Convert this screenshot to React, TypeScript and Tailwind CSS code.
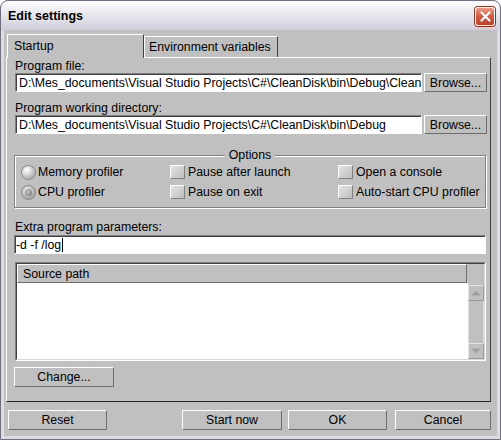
import React from "react";

function Btn({ children, className }: { children: React.ReactNode; className?: string }) {
  return (
    <div
      className={
        "flex items-center justify-center shrink-0 bg-[#c0c0c0] border border-t-white border-l-white border-b-[#6c6c6c] border-r-[#6c6c6c] text-black " +
        (className ?? "")
      }
    >
      {children}
    </div>
  );
}

function Sunken({ children, className }: { children?: React.ReactNode; className?: string }) {
  return (
    <div
      className={
        "min-w-0 bg-white border border-t-[#808080] border-l-[#808080] border-b-white border-r-white shadow-[inset_1px_1px_0_#404040] flex items-center overflow-hidden whitespace-nowrap " +
        (className ?? "")
      }
    >
      {children}
    </div>
  );
}

function Radio({ checked }: { checked?: boolean }) {
  return (
    <span
      className={
        "w-[13px] h-[13px] rounded-full shrink-0 flex items-center justify-center shadow-[0_0_0_1px_#8a8a8a] " +
        (checked
          ? "bg-[radial-gradient(circle_at_40%_35%,#f4f4f4_0%,#b4b4b4_55%,#7c7c7c_100%)]"
          : "bg-[radial-gradient(circle_at_35%_30%,#ffffff_0%,#d6d6d6_40%,#8e8e8e_100%)]")
      }
    >
      {checked && (
        <span className="w-[7px] h-[7px] rounded-full bg-[radial-gradient(circle_at_40%_40%,#c8c8c8_0%,#9a9a9a_50%,#6a6a6a_100%)]" />
      )}
    </span>
  );
}

function Check() {
  return (
    <span className="w-[15px] h-[14px] shrink-0 bg-[linear-gradient(135deg,#e4e4e4,#bdbdbd)] border border-t-white border-l-white border-b-[#808080] border-r-[#808080]" />
  );
}

function ScrollBtn({ up }: { up?: boolean }) {
  return (
    <div className="h-[16px] w-[16px] flex items-center justify-center bg-[#c0c0c0] border border-t-[#e4e4e4] border-l-[#e4e4e4] border-b-[#9a9a9a] border-r-[#9a9a9a]">
      <svg width="10" height="6" viewBox="0 0 10 6">
        {up ? <path d="M0 5.5 L5 0.5 L10 5.5 Z" fill="#a2a2a2" /> : <path d="M0 0.5 L5 5.5 L10 0.5 Z" fill="#a2a2a2" />}
      </svg>
    </div>
  );
}

export default function App() {
  return (
    <div className="w-[501px] h-[440px] flex flex-col bg-[#6f6f80] border border-[#6f6f80] rounded-t-[8px] overflow-hidden font-['Liberation_Sans',Arial,sans-serif] text-[12.3px] leading-[14px] text-black">
      {/* title bar */}
      <div className="h-[29px] shrink-0 flex items-start bg-[linear-gradient(#fdfdfe,#e8e8ef_45%,#cfcfda)]">
        <span className="ml-[7px] mt-[8px] font-bold text-[12.5px] leading-[15px] text-black">Edit settings</span>
        <div className="ml-auto mr-[5px] mt-[6px] w-[20px] h-[19px] rounded-[3px] border border-white bg-[linear-gradient(#ec9c88,#d6583e_50%,#c0402a)] shadow-[0_0_0_1px_#8e3626] flex items-center justify-center">
          <svg width="11" height="11" viewBox="0 0 11 11">
            <path d="M1.5 1.5 L9.5 9.5 M9.5 1.5 L1.5 9.5" stroke="white" strokeWidth="2.2" strokeLinecap="round" />
          </svg>
        </div>
      </div>

      {/* frame */}
      <div className="flex-1 min-h-0 flex border-x-[3px] border-b-[3px] border-[#dcdce4]">
        <div className="w-[493px] min-w-0 bg-[#c0c0c0] flex flex-col pl-[2px] pr-[6px] pt-[4px]">
          {/* tabs */}
          <div className="flex items-end h-[23px] pl-[1px]">
            <div className="relative z-10 h-[24px] mb-[-1px] w-[137px] bg-[#c0c0c0] border-t border-l border-t-white border-l-white border-r border-r-[#404040] pl-[6px] pt-[4px]">
              Startup
            </div>
            <div className="h-[21px] w-[134px] border-t border-l border-t-white border-l-white border-r border-r-[#404040] pl-[4px] pt-[3px]">
              Environment variables
            </div>
          </div>

          {/* panel */}
          <div className="w-[485px] h-[345px] flex flex-col border border-t-white border-l-white border-r-[#404040] border-b-[#202020] pl-[7px] pr-[3px] pt-[1px]">
            <div className="h-[14px] ml-[1px]">Program file:</div>
            <div className="h-[19px] flex gap-[2px]">
              <Sunken className="flex-1 pl-[3px] ml-[1px]">
                {"D:\\Mes_documents\\Visual Studio Projects\\C#\\CleanDisk\\bin\\Debug\\CleanDisk.exe"}
              </Sunken>
              <Btn className="w-[63px]">Browse...</Btn>
            </div>

            <div className="h-[14px] ml-[1px] mt-[9px]">Program working directory:</div>
            <div className="h-[19px] flex gap-[2px]">
              <Sunken className="flex-1 pl-[3px] ml-[1px]">
                {"D:\\Mes_documents\\Visual Studio Projects\\C#\\CleanDisk\\bin\\Debug"}
              </Sunken>
              <Btn className="w-[63px]">Browse...</Btn>
            </div>

            {/* options group */}
            <div className="relative mt-[21px] mr-[1px] h-[53px] border border-[#808080] shadow-[inset_1px_1px_0_#ffffff,1px_1px_0_#ffffff]">
              <span className="absolute left-1/2 -translate-x-1/2 top-[-8px] px-[4px] bg-[#c0c0c0]">Options</span>
              <div className="grid grid-cols-[148px_168px_1fr] pl-[7px] pt-[6px]">
                <div className="h-[20px] flex items-center gap-[3px]">
                  <Radio />
                  <span>Memory profiler</span>
                </div>
                <div className="h-[20px] flex items-center gap-[3px]">
                  <Check />
                  <span>Pause after launch</span>
                </div>
                <div className="h-[20px] flex items-center gap-[3px]">
                  <Check />
                  <span>Open a console</span>
                </div>
                <div className="h-[20px] flex items-center gap-[3px]">
                  <Radio checked />
                  <span>CPU profiler</span>
                </div>
                <div className="h-[20px] flex items-center gap-[3px]">
                  <Check />
                  <span>Pause on exit</span>
                </div>
                <div className="h-[20px] flex items-center gap-[3px]">
                  <Check />
                  <span>Auto-start CPU profiler</span>
                </div>
              </div>
            </div>

            <div className="h-[14px] ml-[1px] mt-[12px]">Extra program parameters:</div>
            <Sunken className="mt-[1px] mr-[1px] h-[19px] pl-[1px]">
              <span>-d -f /log</span>
              <span className="inline-block w-px h-[14px] bg-black ml-[1px]" />
            </Sunken>

            {/* table */}
            <div className="mt-[8px] mr-[1px] ml-[1px] h-[99px] border border-t-[#808080] border-l-[#808080] border-b-white border-r-white">
              <div className="h-full flex flex-col border border-t-[#404040] border-l-[#404040] border-b-[#d8d8d8] border-r-[#d8d8d8]">
                <div className="h-[19px] flex shrink-0">
                  <div className="w-[450px] flex items-center pl-[5px] bg-[#c0c0c0] border border-t-white border-l-white border-b-[#6c6c6c] border-r-[#6c6c6c]">
                    Source path
                  </div>
                  <div className="flex-1 bg-[#c0c0c0]" />
                </div>
                <div className="flex-1 flex">
                  <div className="flex-1 bg-white" />
                  <div className="w-[16px] flex flex-col bg-[#c0c0c0] pt-[2px]">
                    <ScrollBtn up />
                    <div className="flex-1 border-x border-[#dedede]" />
                    <ScrollBtn />
                  </div>
                </div>
              </div>
            </div>

            <Btn className="mt-[6px] w-[100px] h-[20px]">Change...</Btn>
          </div>

          {/* bottom buttons */}
          <div className="mt-[8px] h-[20px] flex">
            <Btn className="ml-[2px] w-[99px]">Reset</Btn>
            <Btn className="ml-[75px] w-[100px]">Start now</Btn>
            <Btn className="ml-[6px] w-[99px]">OK</Btn>
            <Btn className="ml-[8px] w-[96px]">Cancel</Btn>
          </div>
        </div>
      </div>
    </div>
  );
}
